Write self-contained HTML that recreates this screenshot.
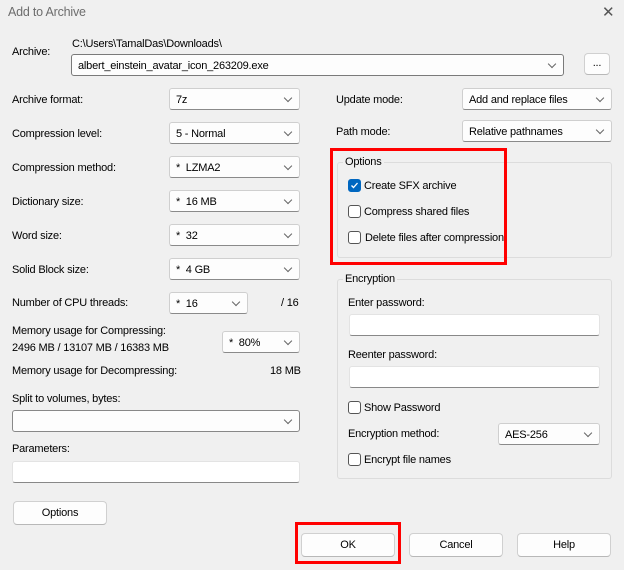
<!DOCTYPE html>
<html><head><style>
*{box-sizing:border-box;margin:0;padding:0}
body{width:624px;height:570px;background:#f0f0f0;font-family:"Liberation Sans",sans-serif;font-size:11px;letter-spacing:-0.2px;color:#000;position:relative;overflow:hidden}
.a{position:absolute;white-space:nowrap}
.cb{position:absolute;height:22px;background:#fdfdfd;border:1px solid #cfcfcf;border-bottom-color:#8a8a8a;border-radius:3px;padding:5px 0 0 6px}
.cb::after{content:"";position:absolute;right:8px;top:6px;width:5px;height:5px;border-right:1px solid #666;border-bottom:1px solid #666;transform:rotate(45deg)}
.in{position:absolute;height:22px;background:#fff;border:1px solid #e3e3e3;border-bottom:1px solid #888;border-radius:3px}
.btn{position:absolute;height:24px;background:#fdfdfd;border:1px solid #d0d0d0;border-bottom-color:#b8b8b8;border-radius:4px;text-align:center;line-height:23px}
.chk{position:absolute;width:13px;height:13px;border:1px solid #555;border-radius:3px;background:#fff}
.chk.on{background:#0067c0;border-color:#0067c0}
.grp{position:absolute;border:1px solid #dcdcdc;border-radius:3px}
.red{position:absolute;border:3px solid #f00}
</style></head><body>
<div class="a" style="left:8px;top:5px;color:#6d6d6d;font-size:12.5px">Add to Archive</div>
<div class="a" style="left:602px;top:3px;color:#555;font-size:15px">✕</div>

<div class="a" style="left:12px;top:46px">Archive:</div>
<div class="a" style="left:72px;top:38px">C:\Users\TamalDas\Downloads\</div>
<div class="cb" style="left:71px;top:54px;width:493px;border-color:#7a7a7a">albert_einstein_avatar_icon_263209.exe</div>
<div class="btn" style="left:584px;top:53px;width:26px;height:22px;line-height:18px">...</div>

<div class="a" style="left:12px;top:94px">Archive format:</div>
<div class="cb" style="left:169px;top:88px;width:131px">7z</div>
<div class="a" style="left:12px;top:128px">Compression level:</div>
<div class="cb" style="left:169px;top:122px;width:131px">5 - Normal</div>
<div class="a" style="left:12px;top:162px">Compression method:</div>
<div class="cb" style="left:169px;top:156px;width:131px">*&nbsp; LZMA2</div>
<div class="a" style="left:12px;top:196px">Dictionary size:</div>
<div class="cb" style="left:169px;top:190px;width:131px">*&nbsp; 16 MB</div>
<div class="a" style="left:12px;top:230px">Word size:</div>
<div class="cb" style="left:169px;top:224px;width:131px">*&nbsp; 32</div>
<div class="a" style="left:12px;top:264px">Solid Block size:</div>
<div class="cb" style="left:169px;top:258px;width:131px">*&nbsp; 4 GB</div>
<div class="a" style="left:12px;top:297px">Number of CPU threads:</div>
<div class="cb" style="left:169px;top:292px;width:79px">*&nbsp; 16</div>
<div class="a" style="left:281px;top:297px">/ 16</div>
<div class="a" style="left:12px;top:325px">Memory usage for Compressing:</div>
<div class="a" style="left:12px;top:342px">2496 MB / 13107 MB / 16383 MB</div>
<div class="cb" style="left:222px;top:331px;width:78px">*&nbsp; 80%</div>
<div class="a" style="left:12px;top:365px">Memory usage for Decompressing:</div>
<div class="a" style="left:270px;top:365px">18 MB</div>
<div class="a" style="left:12px;top:393px">Split to volumes, bytes:</div>
<div class="cb" style="left:12px;top:410px;width:288px;border-color:#888"></div>
<div class="a" style="left:12px;top:443px">Parameters:</div>
<div class="in" style="left:12px;top:461px;width:288px"></div>
<div class="btn" style="left:13px;top:501px;width:94px">Options</div>

<div class="a" style="left:336px;top:94px">Update mode:</div>
<div class="cb" style="left:462px;top:88px;width:150px">Add and replace files</div>
<div class="a" style="left:336px;top:126px">Path mode:</div>
<div class="cb" style="left:462px;top:120px;width:150px">Relative pathnames</div>

<div class="grp" style="left:337px;top:162px;width:275px;height:96px"></div>
<div class="a" style="left:343px;top:156px;background:#f0f0f0;padding:0 2px">Options</div>
<div class="chk on" style="left:348px;top:179px"><svg width="11" height="11" style="position:absolute;left:0;top:0"><path d="M2.5 5.5 L4.5 7.5 L8.5 3" stroke="#fff" stroke-width="1.3" fill="none"/></svg></div>
<div class="a" style="left:364px;top:180px">Create SFX archive</div>
<div class="chk" style="left:348px;top:205px"></div>
<div class="a" style="left:364px;top:206px">Compress shared files</div>
<div class="chk" style="left:348px;top:231px"></div>
<div class="a" style="left:365px;top:232px">Delete files after compression</div>
<div class="red" style="left:330px;top:148px;width:177px;height:117px"></div>

<div class="grp" style="left:337px;top:279px;width:275px;height:200px"></div>
<div class="a" style="left:343px;top:273px;background:#f0f0f0;padding:0 2px">Encryption</div>
<div class="a" style="left:348px;top:297px">Enter password:</div>
<div class="in" style="left:349px;top:314px;width:251px"></div>
<div class="a" style="left:348px;top:349px">Reenter password:</div>
<div class="in" style="left:349px;top:366px;width:251px"></div>
<div class="chk" style="left:348px;top:401px"></div>
<div class="a" style="left:364px;top:402px">Show Password</div>
<div class="a" style="left:348px;top:428px">Encryption method:</div>
<div class="cb" style="left:498px;top:423px;width:102px">AES-256</div>
<div class="chk" style="left:348px;top:453px"></div>
<div class="a" style="left:364px;top:454px">Encrypt file names</div>

<div class="btn" style="left:301px;top:533px;width:94px">OK</div>
<div class="red" style="left:295px;top:522px;width:106px;height:42px"></div>
<div class="btn" style="left:409px;top:533px;width:94px">Cancel</div>
<div class="btn" style="left:517px;top:533px;width:94px">Help</div>
</body></html>
